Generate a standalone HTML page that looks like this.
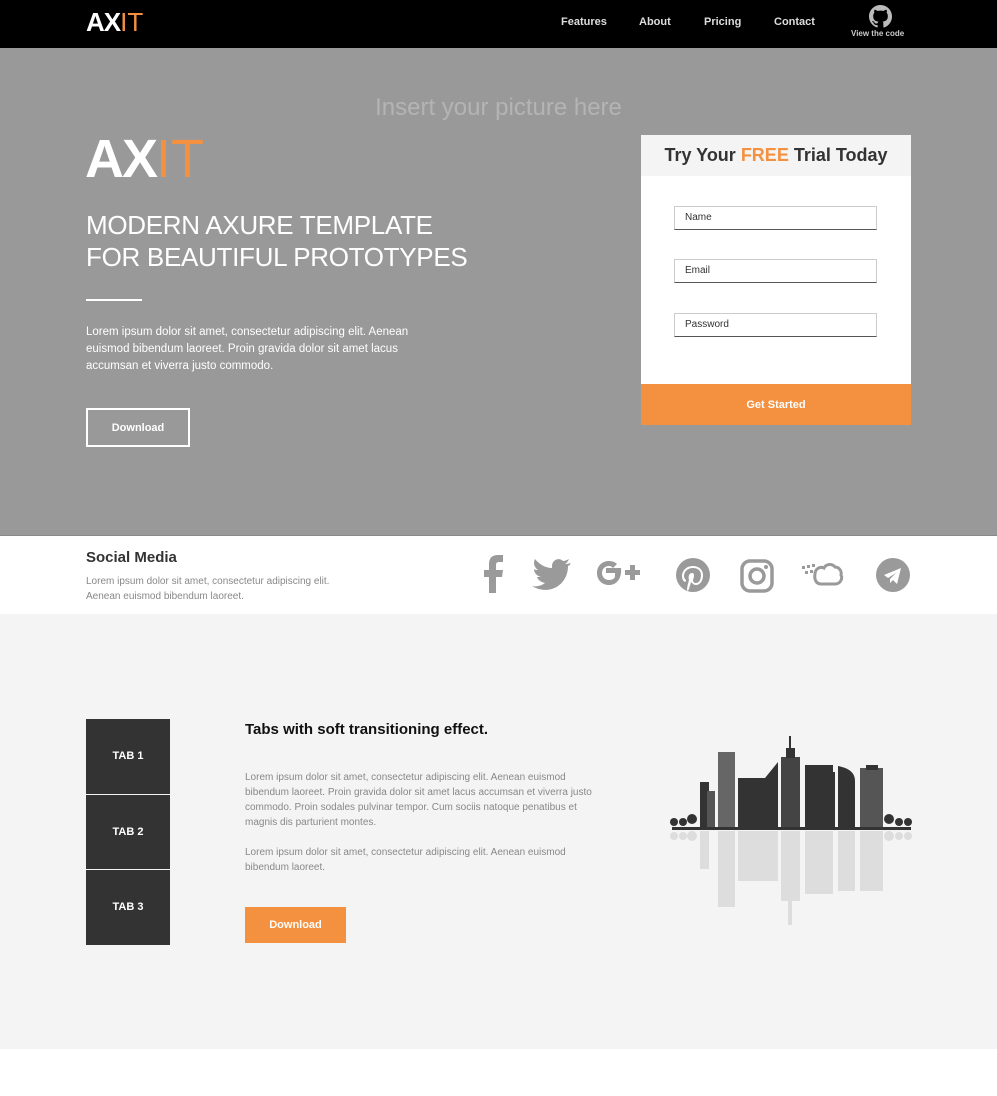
<!DOCTYPE html>
<html><head><style>
*{margin:0;padding:0;box-sizing:border-box}
body{width:997px;height:1096px;background:#fff;font-family:"Liberation Sans",sans-serif;position:relative;overflow:hidden}
.a{position:absolute}
</style></head><body>
<div class="a" style="left:0;top:0;width:997px;height:48px;background:#000"></div>
<div class="a" style="left:86px;top:7px;font-size:26px;font-weight:bold;color:#fff;letter-spacing:-1px">AX<span style="color:#f39140;font-weight:normal;letter-spacing:0">IT</span></div>
<div class="a" style="left:561px;top:16px;font-size:11px;font-weight:bold;color:#ddd">Features</div>
<div class="a" style="left:639px;top:16px;font-size:11px;font-weight:bold;color:#ddd">About</div>
<div class="a" style="left:704px;top:16px;font-size:11px;font-weight:bold;color:#ddd">Pricing</div>
<div class="a" style="left:774px;top:16px;font-size:11px;font-weight:bold;color:#ddd">Contact</div>
<svg class="a" style="left:869px;top:5px" width="23" height="23" viewBox="0 0 16 16"><path fill="#bbb" d="M8 0C3.58 0 0 3.58 0 8c0 3.540 2.29 6.53 5.47 7.59.4.07.55-.17.55-.38v-1.330c-2.23.48-2.7-1.07-2.7-1.07-.36-.93-.89-1.170-.89-1.170-.73-.5.05-.49.05-.49.8.06 1.23.83 1.23.83.71 1.23 1.87.87 2.33.66.07-.52.28-.87.51-1.07-1.78-.2-3.64-.89-3.64-3.95 0-.87.31-1.59.82-2.15-.08-.2-.36-1.02.08-2.12 0 0 .67-.21 2.2.82.64-.18 1.32-.27 2-.27.68 0 1.36.09 2 .27 1.53-1.04 2.2-.82 2.2-.82.44 1.1.16 1.92.08 2.12.51.56.82 1.27.82 2.15 0 3.07-1.87 3.75-3.65 3.95.29.25.54.73.54 1.48v2.2c0 .21.15.46.55.38A8.01 8.01 0 0016 8c0-4.42-3.58-8-8-8z"/></svg>
<div class="a" style="left:851px;top:29px;font-size:8px;font-weight:bold;color:#ccc">View the code</div>

<div class="a" style="left:0;top:48px;width:997px;height:487px;background:#999"></div>
<div class="a" style="left:0;top:94px;width:997px;text-align:center;font-size:24px;color:#b4b4b4">Insert your picture here</div>
<div class="a" style="left:85px;top:128px;font-size:54px;font-weight:bold;color:#fff;letter-spacing:-2px">AX<span style="color:#f39140;font-weight:normal;letter-spacing:0">IT</span></div>
<div class="a" style="left:86px;top:209px;font-size:26px;color:#fff;line-height:32px;letter-spacing:-0.3px">MODERN AXURE TEMPLATE<br>FOR BEAUTIFUL PROTOTYPES</div>
<div class="a" style="left:86px;top:299px;width:56px;height:2px;background:#fff"></div>
<div class="a" style="left:86px;top:324px;font-size:11.5px;color:#fff;line-height:17px;width:325px">Lorem ipsum dolor sit amet, consectetur adipiscing elit. Aenean euismod bibendum laoreet. Proin gravida dolor sit amet lacus accumsan et viverra justo commodo.</div>
<div class="a" style="left:86px;top:408px;width:104px;height:39px;border:2px solid #fff;color:#fff;font-size:11px;font-weight:bold;text-align:center;line-height:37px">Download</div>

<div class="a" style="left:641px;top:135px;width:270px;height:290px;background:#fff"></div>
<div class="a" style="left:641px;top:135px;width:270px;height:41px;background:#f4f4f4;text-align:center;font-size:18px;font-weight:bold;color:#333;line-height:41px">Try Your <span style="color:#f39140">FREE</span> Trial Today</div>
<div class="a" style="left:674px;top:206px;width:203px;height:24px;border:1px solid #ccc;border-bottom:1px solid #555;font-size:10px;color:#333;padding:5px 10px">Name</div>
<div class="a" style="left:674px;top:259px;width:203px;height:24px;border:1px solid #ccc;border-bottom:1px solid #555;font-size:10px;color:#333;padding:5px 10px">Email</div>
<div class="a" style="left:674px;top:313px;width:203px;height:24px;border:1px solid #ccc;border-bottom:1px solid #555;font-size:10px;color:#333;padding:5px 10px">Password</div>
<div class="a" style="left:641px;top:384px;width:270px;height:41px;background:#f39140;color:#fff;font-size:11px;font-weight:bold;text-align:center;line-height:42px">Get Started</div>

<div class="a" style="left:0;top:535px;width:997px;height:1px;background:#888"></div>
<div class="a" style="left:86px;top:549px;font-size:15px;font-weight:bold;color:#333">Social Media</div>
<div class="a" style="left:86px;top:574px;font-size:10px;color:#888;line-height:15px">Lorem ipsum dolor sit amet, consectetur adipiscing elit.<br>Aenean euismod bibendum laoreet.</div>
<svg class="a" style="left:460px;top:540px" width="460" height="70" viewBox="0 0 460 70" fill="#9a9a9a">
<path d="M29 53V37h-5v-7h5v-6c0-6 3-9 9-9h5v7h-4c-2 0-3 1-3 3v5h7l-1 7h-6v16z"/>
<path d="M110 23c-2 1-4 1-5 1 2-1 3-3 4-5-2 1-4 2-6 2-4-4-11-1-11 5v2c-7 0-13-4-17-9-2 4-1 8 3 11-1 0-3 0-4-1 0 4 3 7 7 8h-4c1 3 4 5 8 6-4 3-9 4-13 3 16 10 36 0 36-20 2-1 3-2 2-3z"/>
<path d="M155 33h-9v-5h15c1 10-4 17-12 17-7 0-12-5-12-12s5-12 12-12c3 0 6 1 8 3l-4 4c-1-1-2-2-4-2-4 0-7 3-7 7s3 7 7 7 6-2 6-4zM170 30v-5h5v5h5v5h-5v5h-5v-5h-5v-5z"/>
<circle cx="233" cy="35" r="17"/><path fill="#fff" d="M231 42c-1 4-2 7-3 9l-1-1c0-3 1-6 2-10-1-3 0-7 3-7 3 0 2 4 1 7 0 2 1 3 3 3 4 0 5-5 5-8 0-4-3-7-8-7-6 0-9 4-9 8 0 2 1 3 2 4v1l-1 1c-2-1-3-3-3-6 0-5 4-10 11-10 6 0 10 4 10 9 0 6-3 10-7 10-2 0-3-1-4-2z"/>
<rect x="282" y="21" width="30" height="30" rx="8" fill="none" stroke="#9a9a9a" stroke-width="3.5"/><circle cx="297" cy="36" r="7" fill="none" stroke="#9a9a9a" stroke-width="3.5"/><circle cx="306" cy="27" r="2"/>
<path d="M355 34c0-5 5-8 9-6 2-4 8-5 11-1 4 0 7 4 6 8 2 4-1 9-6 9h-14c-5 0-7-5-6-10z" fill="none" stroke="#9a9a9a" stroke-width="3"/><rect x="342" y="26" width="3" height="3"/><rect x="347" y="25" width="3" height="3"/><rect x="345" y="31" width="3" height="3"/><rect x="350" y="30" width="3" height="3"/><rect x="352" y="24" width="3" height="3"/>
<circle cx="433" cy="35" r="17"/><path fill="#fff" d="M424 35l17-7-4 16-4-4-3 3v-4l6-6-8 5z"/>
</svg>

<div class="a" style="left:0;top:614px;width:997px;height:435px;background:#f4f4f4"></div>
<div class="a" style="left:86px;top:719px;width:84px;height:75px;background:#333;color:#fff;font-size:11px;font-weight:bold;text-align:center;line-height:75px">TAB 1</div>
<div class="a" style="left:86px;top:795px;width:84px;height:74px;background:#333;color:#fff;font-size:11px;font-weight:bold;text-align:center;line-height:74px">TAB 2</div>
<div class="a" style="left:86px;top:870px;width:84px;height:75px;background:#333;color:#fff;font-size:11px;font-weight:bold;text-align:center;line-height:75px">TAB 3</div>
<div class="a" style="left:245px;top:721px;font-size:15px;font-weight:bold;color:#111">Tabs with soft transitioning effect.</div>
<div class="a" style="left:245px;top:770px;width:350px;font-size:10px;color:#888;line-height:15px">Lorem ipsum dolor sit amet, consectetur adipiscing elit. Aenean euismod bibendum laoreet. Proin gravida dolor sit amet lacus accumsan et viverra justo commodo. Proin sodales pulvinar tempor. Cum sociis natoque penatibus et magnis dis parturient montes.<br><br>Lorem ipsum dolor sit amet, consectetur adipiscing elit. Aenean euismod bibendum laoreet.</div>
<div class="a" style="left:245px;top:907px;width:101px;height:36px;background:#f39140;color:#fff;font-size:11px;font-weight:bold;text-align:center;line-height:36px">Download</div>

<svg class="a" style="left:660px;top:720px" width="260" height="220">
<g fill="#ddd">
<rect x="40" y="111" width="9" height="38"/><rect x="58" y="111" width="17" height="76"/><rect x="78" y="111" width="40" height="50"/><rect x="121" y="111" width="19" height="70"/><rect x="128" y="181" width="4" height="24"/><rect x="145" y="111" width="28" height="63"/><rect x="178" y="111" width="17" height="60"/><rect x="200" y="111" width="23" height="60"/>
<circle cx="14" cy="116" r="4"/><circle cx="23" cy="116" r="4"/><circle cx="32" cy="116" r="5"/><circle cx="229" cy="116" r="5"/><circle cx="239" cy="116" r="4"/><circle cx="248" cy="116" r="4"/>
</g>
<g fill="#333">
<rect x="40" y="62" width="9" height="46"/><rect x="47" y="71" width="8" height="37" fill="#555"/><rect x="58" y="32" width="17" height="76" fill="#666"/><rect x="78" y="58" width="40" height="50"/><path d="M105 58l13-16v66h-13z"/><rect x="121" y="37" width="19" height="71" fill="#444"/><rect x="126" y="28" width="9" height="10"/><rect x="129" y="16" width="2" height="14"/><rect x="145" y="45" width="28" height="63"/><rect x="170" y="52" width="5" height="56"/><path d="M178 46c10 2 17 6 17 15v47h-17z"/><rect x="200" y="48" width="23" height="60" fill="#555"/><rect x="206" y="45" width="12" height="5"/>
<circle cx="14" cy="102" r="4"/><circle cx="23" cy="102" r="4"/><circle cx="32" cy="99" r="5"/><circle cx="229" cy="99" r="5"/><circle cx="239" cy="102" r="4"/><circle cx="248" cy="102" r="4"/>
<rect x="12" y="107" width="239" height="3"/>
</g>
</svg>
</body></html>
